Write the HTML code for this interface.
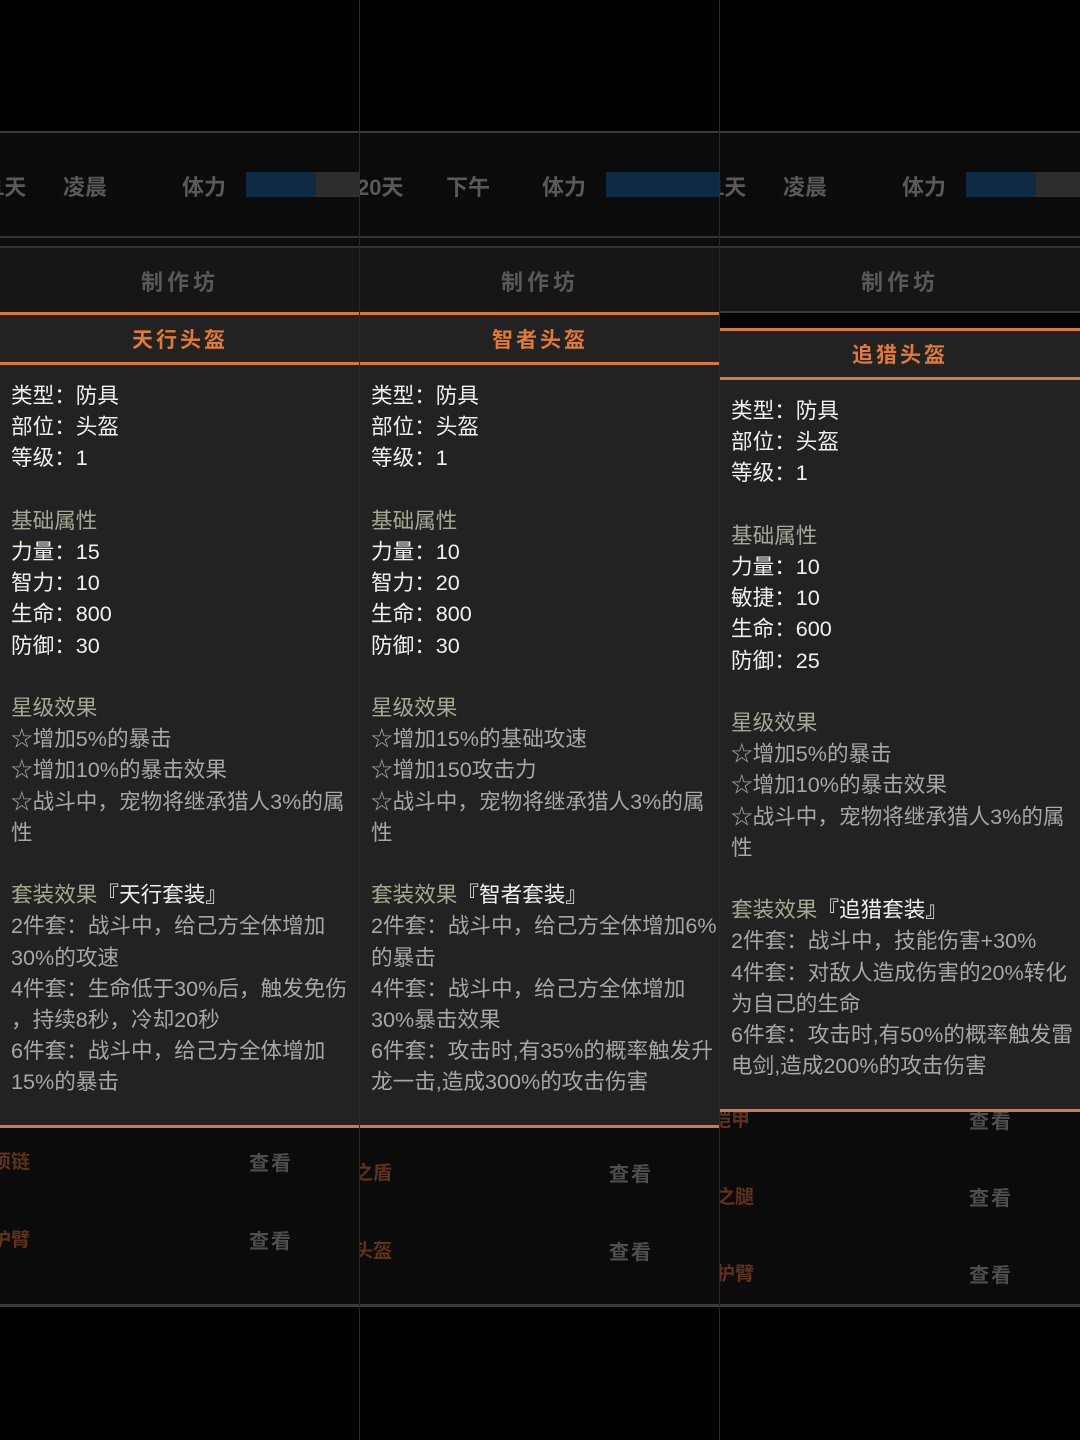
<!DOCTYPE html>
<html><head><meta charset="utf-8"><style>
*{margin:0;padding:0;box-sizing:border-box}
body{width:1080px;height:1440px;background:#000;position:relative;overflow:hidden;font-family:"Liberation Sans","Noto Sans CJK SC",sans-serif}
.col{position:absolute;top:0;width:360px;height:1440px;overflow:hidden;background:#000}
.abs{position:absolute}
.st{position:absolute;color:#595959;font-size:22px;font-weight:bold;top:170px;white-space:nowrap}
.hd{position:absolute;left:0;width:360px;text-align:center;color:#585858;font-size:22px;font-weight:bold;letter-spacing:4px}
.ttl{position:absolute;left:0;width:360px;text-align:center;color:#e07a35;font-size:21px;font-weight:bold;letter-spacing:3px}
.body{position:absolute;left:11px;font-size:21.6px;line-height:31.2px;white-space:nowrap;color:#f0f0f0}
.h{color:#a5a893}
.g{color:#a6a6a6}
.o{position:absolute;color:#5e321a;font-size:19px;font-weight:bold;white-space:nowrap}
.v{position:absolute;color:#4e4e4e;font-size:20px;font-weight:bold;white-space:nowrap;letter-spacing:2px}
</style></head><body>

<!-- column 1 -->
<div class="col" style="left:0">
 <div class="abs" style="top:131px;left:0;width:360px;height:2px;background:#3a3a3a"></div>
 <div class="abs" style="top:133px;left:0;width:360px;height:104px;background:#0b0b0b"></div>
 <div class="st" style="left:-8px">1天</div>
 <div class="st" style="left:63px">凌晨</div>
 <div class="st" style="left:182px">体力</div>
 <div class="abs" style="top:172px;left:246px;width:70px;height:25px;background:#0f2a44"></div>
 <div class="abs" style="top:172px;left:316px;width:44px;height:25px;background:#2d2d2d"></div>
 <div class="abs" style="top:236px;left:0;width:360px;height:2px;background:#333"></div>
 <div class="abs" style="top:238px;left:0;width:360px;height:8px;background:#0d0d0d"></div>
 <div class="abs" style="top:246px;left:0;width:360px;height:2px;background:#333"></div>
 <div class="abs" style="top:248px;left:0;width:360px;height:65px;background:#161616"></div>
 <div class="hd" style="top:265px">制作坊</div>
 <div class="abs" style="top:312px;left:0;width:360px;height:3px;background:#d27a3e"></div>
 <div class="abs" style="top:315px;left:0;width:360px;height:810px;background:#222"></div>
 <div class="ttl" style="top:324px">天行头盔</div>
 <div class="abs" style="top:362px;left:0;width:360px;height:3px;background:#d27a3e"></div>
 <div class="body" style="top:380px">类型：防具<br>部位：头盔<br>等级：1<br><br><span class="h">基础属性</span><br>力量：15<br>智力：10<br>生命：800<br>防御：30<br><br><span class="h">星级效果</span><br><span class="g">☆增加5%的暴击<br>☆增加10%的暴击效果<br>☆战斗中，宠物将继承猎人3%的属<br>性</span><br><br><span class="h">套装效果</span>『天行套装』<br><span class="g">2件套：战斗中，给己方全体增加<br>30%的攻速<br>4件套：生命低于30%后，触发免伤<br>，持续8秒，冷却20秒<br>6件套：战斗中，给己方全体增加<br>15%的暴击</span></div>
 <div class="abs" style="top:1125px;left:0;width:360px;height:3px;background:#d27a3e"></div>
 <div class="abs" style="top:1128px;left:0;width:360px;height:176px;background:#0b0b0b"></div>
 <div class="o" style="left:-8px;top:1147px">项链</div>
 <div class="v" style="left:249px;top:1147px">查看</div>
 <div class="o" style="left:-8px;top:1225px">护臂</div>
 <div class="v" style="left:249px;top:1225px">查看</div>
 <div class="abs" style="top:1304px;left:0;width:360px;height:3px;background:#3a3a3a"></div>
</div>

<!-- column 2 -->
<div class="col" style="left:360px">
 <div class="abs" style="top:131px;left:0;width:360px;height:2px;background:#3a3a3a"></div>
 <div class="abs" style="top:133px;left:0;width:360px;height:104px;background:#0b0b0b"></div>
 <div class="st" style="left:-3px">20天</div>
 <div class="st" style="left:86px">下午</div>
 <div class="st" style="left:182px">体力</div>
 <div class="abs" style="top:172px;left:246px;width:114px;height:25px;background:#0f2a44"></div>
 <div class="abs" style="top:236px;left:0;width:360px;height:2px;background:#333"></div>
 <div class="abs" style="top:238px;left:0;width:360px;height:8px;background:#0d0d0d"></div>
 <div class="abs" style="top:246px;left:0;width:360px;height:2px;background:#333"></div>
 <div class="abs" style="top:248px;left:0;width:360px;height:65px;background:#161616"></div>
 <div class="hd" style="top:265px">制作坊</div>
 <div class="abs" style="top:312px;left:0;width:360px;height:3px;background:#d27a3e"></div>
 <div class="abs" style="top:315px;left:0;width:360px;height:810px;background:#222"></div>
 <div class="ttl" style="top:324px">智者头盔</div>
 <div class="abs" style="top:362px;left:0;width:360px;height:3px;background:#d27a3e"></div>
 <div class="body" style="top:380px">类型：防具<br>部位：头盔<br>等级：1<br><br><span class="h">基础属性</span><br>力量：10<br>智力：20<br>生命：800<br>防御：30<br><br><span class="h">星级效果</span><br><span class="g">☆增加15%的基础攻速<br>☆增加150攻击力<br>☆战斗中，宠物将继承猎人3%的属<br>性</span><br><br><span class="h">套装效果</span>『智者套装』<br><span class="g">2件套：战斗中，给己方全体增加6%<br>的暴击<br>4件套：战斗中，给己方全体增加<br>30%暴击效果<br>6件套：攻击时,有35%的概率触发升<br>龙一击,造成300%的攻击伤害</span></div>
 <div class="abs" style="top:1125px;left:0;width:360px;height:3px;background:#d27a3e"></div>
 <div class="abs" style="top:1128px;left:0;width:360px;height:176px;background:#0b0b0b"></div>
 <div class="o" style="left:-6px;top:1158px">之盾</div>
 <div class="v" style="left:249px;top:1158px">查看</div>
 <div class="o" style="left:-6px;top:1236px">头盔</div>
 <div class="v" style="left:249px;top:1236px">查看</div>
 <div class="abs" style="top:1304px;left:0;width:360px;height:3px;background:#3a3a3a"></div>
</div>

<!-- column 3 -->
<div class="col" style="left:720px">
 <div class="abs" style="top:131px;left:0;width:360px;height:2px;background:#3a3a3a"></div>
 <div class="abs" style="top:133px;left:0;width:360px;height:104px;background:#0b0b0b"></div>
 <div class="st" style="left:-8px">1天</div>
 <div class="st" style="left:63px">凌晨</div>
 <div class="st" style="left:182px">体力</div>
 <div class="abs" style="top:172px;left:246px;width:70px;height:25px;background:#0f2a44"></div>
 <div class="abs" style="top:172px;left:316px;width:44px;height:25px;background:#2d2d2d"></div>
 <div class="abs" style="top:236px;left:0;width:360px;height:2px;background:#333"></div>
 <div class="abs" style="top:238px;left:0;width:360px;height:8px;background:#0d0d0d"></div>
 <div class="abs" style="top:246px;left:0;width:360px;height:2px;background:#333"></div>
 <div class="abs" style="top:248px;left:0;width:360px;height:63px;background:#161616"></div>
 <div class="hd" style="top:265px">制作坊</div>
 <div class="abs" style="top:311px;left:0;width:360px;height:2px;background:#3a3a3a"></div>
 <div class="abs" style="top:313px;left:0;width:360px;height:15px;background:#050505"></div>
 <div class="abs" style="top:1090px;left:0;width:360px;height:214px;background:#0b0b0b"></div>
 <div class="o" style="left:-8px;top:1105px">铠甲</div>
 <div class="v" style="left:249px;top:1105px">查看</div>
 <div class="o" style="left:-4px;top:1182px">之腿</div>
 <div class="v" style="left:249px;top:1182px">查看</div>
 <div class="o" style="left:-4px;top:1259px">护臂</div>
 <div class="v" style="left:249px;top:1259px">查看</div>
 <div class="abs" style="top:1304px;left:0;width:360px;height:3px;background:#3a3a3a"></div>
 <div class="abs" style="top:328px;left:0;width:360px;height:3px;background:#d27a3e"></div>
 <div class="abs" style="top:331px;left:0;width:360px;height:779px;background:#222"></div>
 <div class="ttl" style="top:339px">追猎头盔</div>
 <div class="abs" style="top:377px;left:0;width:360px;height:3px;background:#d27a3e"></div>
 <div class="body" style="top:395px">类型：防具<br>部位：头盔<br>等级：1<br><br><span class="h">基础属性</span><br>力量：10<br>敏捷：10<br>生命：600<br>防御：25<br><br><span class="h">星级效果</span><br><span class="g">☆增加5%的暴击<br>☆增加10%的暴击效果<br>☆战斗中，宠物将继承猎人3%的属<br>性</span><br><br><span class="h">套装效果</span>『追猎套装』<br><span class="g">2件套：战斗中，技能伤害+30%<br>4件套：对敌人造成伤害的20%转化<br>为自己的生命<br>6件套：攻击时,有50%的概率触发雷<br>电剑,造成200%的攻击伤害</span></div>
 <div class="abs" style="top:1109px;left:0;width:360px;height:3px;background:#d27a3e"></div>
</div>

<div class="abs" style="top:0;left:359px;width:1px;height:1440px;background:#2a2a2a"></div>
<div class="abs" style="top:0;left:719px;width:1px;height:1440px;background:#2a2a2a"></div>
</body></html>
